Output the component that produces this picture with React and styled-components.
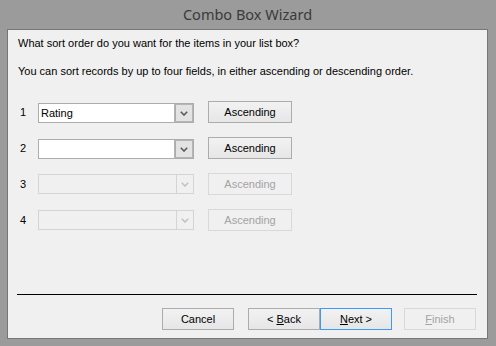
import styled, { createGlobalStyle } from "styled-components";

const Global = createGlobalStyle`
  html, body { margin: 0; padding: 0; background: #9b9b9b; }
  * { box-sizing: border-box; }
`

const Frame = styled.div`
  width: 496px;
  height: 346px;
  background: #9b9b9b;
  display: flex;
  flex-direction: column;
  padding: 0 8px 7px 7px;
`
const TitleBar = styled.div`
  height: 29px;
  display: flex;
  align-items: center;
  justify-content: center;
  font-family: "Noto Sans", "Open Sans", sans-serif;
  font-size: 14.5px;
  color: #3a3a3a;
  padding-bottom: 1px;
`
const Panel = styled.div`
  flex: 1;
  background: #f0f0f0;
  border: 1px solid #767676;
  display: flex;
  flex-direction: column;
  font-family: "Liberation Sans", Arial, sans-serif;
  font-size: 11px;
  color: #000;
`
const Prompt = styled.div`
  padding: 6px 0 0 10px;
  line-height: 15px;
`
const Line = styled.p`
  margin: 0;
  & + & { margin-top: 13px; }
`
const Rows = styled.div`
  display: flex;
  flex-direction: column;
  gap: 14px;
  margin-top: 22px;
  padding-left: 12px;
`
const Row = styled.div`
  height: 22px;
  display: flex;
  align-items: center;
`
const Num = styled.span`
  width: 18px;
`
const Combo = styled.div`
  width: 156px;
  height: 20px;
  display: flex;
  border: 1px solid ${p => (p.$off ? "#d4d4d4" : "#acacac")};
  background: ${p => (p.$off ? "#f0f0f0" : "#fff")};
  margin-right: 14px;
  margin-top: ${p => (p.$off ? "0" : "2px")};
`
const ComboText = styled.span`
  flex: 1;
  padding-left: 2px;
  line-height: 18px;
`
const Drop = styled.span`
  width: 17px;
  display: flex;
  align-items: center;
  justify-content: center;
  background: ${p => (p.$off ? "#f0f0f0" : "#e3e3e3")};
  border-left: 1px solid ${p => (p.$off ? "#d4d4d4" : "#acacac")};
  margin: ${p => (p.$off ? "0" : "1px")};
  outline: ${p => (p.$off ? "none" : "1px solid #b5b5b5")};
  color: ${p => (p.$off ? "#c2c2c2" : "#5a5a5a")};
`
const Button = styled.button`
  width: ${p => p.$w || 84}px;
  height: 22px;
  padding: 0;
  font-family: "Liberation Sans", Arial, sans-serif;
  font-size: 11px;
  color: ${p => (p.disabled ? "#a3a3a3" : "#000")};
  border: 1px solid ${p => (p.$focus ? "#3c9cf5" : p.disabled ? "#d9d9d9" : "#acacac")};
  background: ${p =>
    p.disabled ? "#f0f0f0" : "linear-gradient(#f2f2f2, #e6e6e6)"};
  margin-right: ${p => p.$mr || 0}px;
  align-self: ${p => (p.$raise ? "flex-start" : "center")};
  u { text-decoration-thickness: 1px; text-underline-offset: 1px; }
`
const Separator = styled.hr`
  margin: 63px 10px 0 9px;
  border: none;
  border-top: 1px solid #000;
  height: 0;
`
const Footer = styled.div`
  display: flex;
  justify-content: flex-end;
  margin-top: 13px;
  padding-right: 11px;
`

function Chevron() {
  return (
    <svg width="8" height="5" viewBox="0 0 8 5">
      <polyline points="0.8,0.8 4,4 7.2,0.8" fill="none" stroke="currentColor" strokeWidth="1.6" />
    </svg>
  )
}

const rows = [
  { n: 1, value: "Rating", off: false },
  { n: 2, value: "", off: false },
  { n: 3, value: "", off: true },
  { n: 4, value: "", off: true },
]

export default function App() {
  return (
    <>
      <Global />
      <Frame>
        <TitleBar>Combo Box Wizard</TitleBar>
        <Panel>
          <Prompt>
            <Line>What sort order do you want for the items in your list box?</Line>
            <Line>You can sort records by up to four fields, in either ascending or descending order.</Line>
          </Prompt>
          <Rows>
            {rows.map(r => (
              <Row key={r.n}>
                <Num>{r.n}</Num>
                <Combo $off={r.off}>
                  <ComboText>{r.value}</ComboText>
                  <Drop $off={r.off}><Chevron /></Drop>
                </Combo>
                <Button disabled={r.off} $raise={!r.off}>Ascending</Button>
              </Row>
            ))}
          </Rows>
          <Separator />
          <Footer>
            <Button $w={72} $mr={14}>Cancel</Button>
            <Button $w={72}>&lt; <u>B</u>ack</Button>
            <Button $w={72} $mr={12} $focus>
              <u>N</u>ext &gt;
            </Button>
            <Button $w={72} disabled><u>F</u>inish</Button>
          </Footer>
        </Panel>
      </Frame>
    </>
  )
}
